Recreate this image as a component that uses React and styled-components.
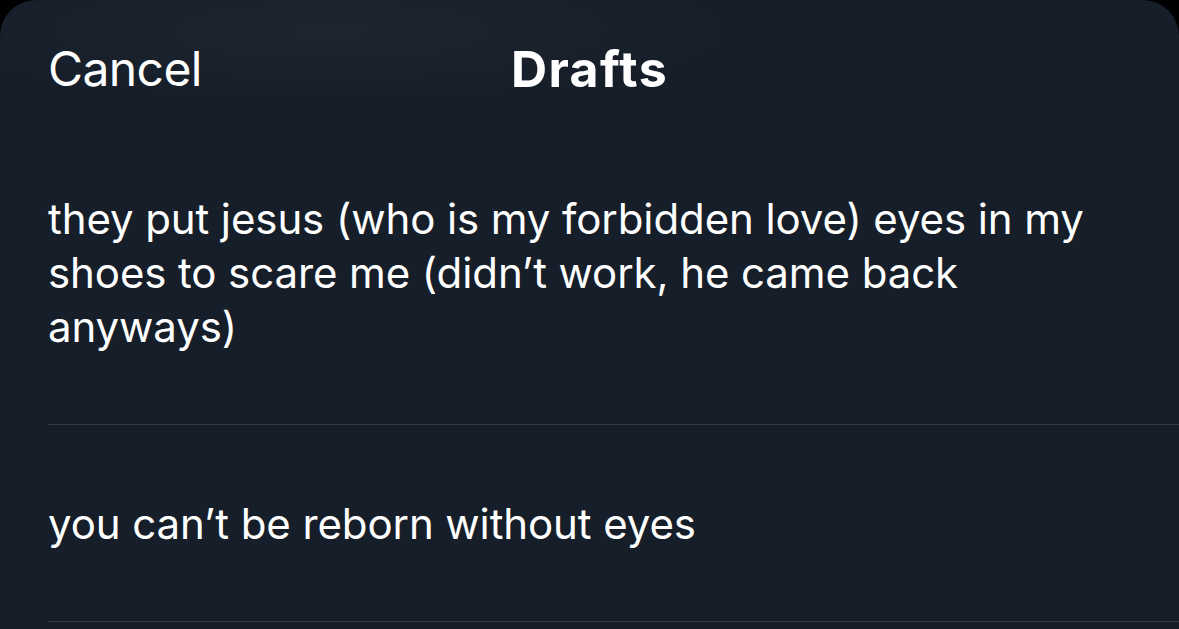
import React from "react";
import styled, { createGlobalStyle } from "styled-components";

const drafts = [
    "they put jesus (who is my forbidden love) eyes in my shoes to scare me (didn\u2019t work, he came back anyways)",
    "you can\u2019t be reborn without eyes",
];

function App() {
    return (
        <>
            <GlobalStyle />
            <Sheet>
                <Header>
                    <CancelButton>Cancel</CancelButton>
                    <Title>Drafts</Title>
                </Header>
                <DraftList>
                    {drafts.map((text, i) => (
                        <DraftRow key={i}>
                            <DraftText>{text}</DraftText>
                        </DraftRow>
                    ))}
                </DraftList>
            </Sheet>
        </>
    );
}

export default App;

const GlobalStyle = createGlobalStyle`
    html, body {
        margin: 0;
        padding: 0;
        background: #000;
        overflow: hidden;
    }
    body {
        font-family: Inter, "Liberation Sans", Arial, sans-serif;
        -webkit-font-smoothing: antialiased;
    }
`;

const Sheet = styled.div`
    width: 1179px;
    height: 640px;
    background: #161e29;
    border-radius: 36px 36px 0 0;
    overflow: hidden;
    background-image: radial-gradient(
        ellipse 420px 70px at 330px 30px,
        rgba(255, 255, 255, 0.03),
        rgba(255, 255, 255, 0) 100%
    );
`;

const Header = styled.div`
    position: relative;
    height: 120px;
    box-sizing: border-box;
    padding: 44px 48px 0;
    display: flex;
`;

const CancelButton = styled.span`
    font-size: 48px;
    line-height: 50px;
    color: #fff;
    letter-spacing: -0.6px;
`;

const Title = styled.h1`
    position: absolute;
    left: 0;
    right: 0;
    top: 44px;
    margin: 0;
    text-align: center;
    font-size: 50px;
    line-height: 50px;
    font-weight: 700;
    color: #fff;
    letter-spacing: 1.4px;
`;

const DraftList = styled.div`
    display: flex;
    flex-direction: column;
`;

const DraftRow = styled.div`
    margin-left: 48px;
    padding: 72px 60px 70px 0;
    border-bottom: 1px solid #323b47;
`;

const DraftText = styled.p`
    margin: 0;
    font-size: 42px;
    line-height: 54px;
    color: #fff;
    letter-spacing: -0.1px;
`;
